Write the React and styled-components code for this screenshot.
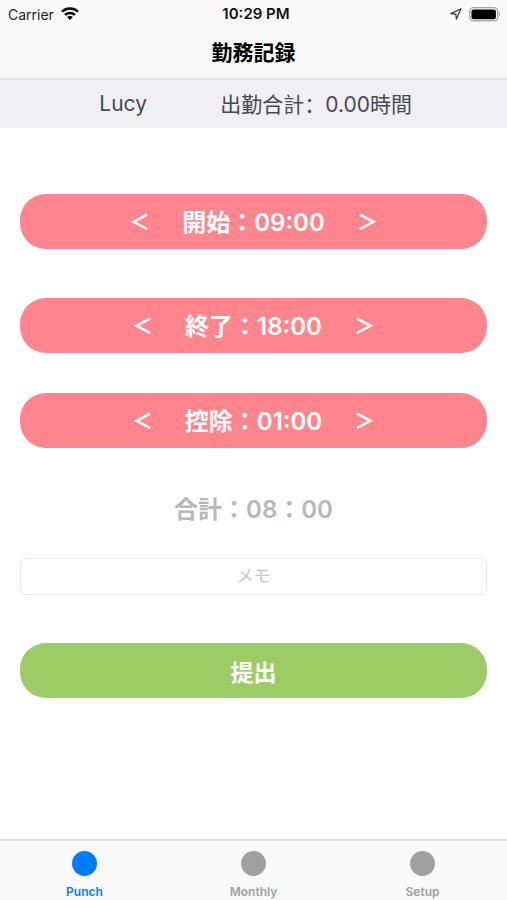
import React, { useState } from 'react';
import styled, { createGlobalStyle } from 'styled-components';

const COLORS = {
  bar: '#f9f9f9',
  line: '#e2e2e4',
  summary: '#efeff4',
  text: '#4a4a4c',
  pink: '#ff868e',
  green: '#9ccc65',
  muted: '#b8b8b8',
  placeholder: '#c7c7cb',
  active: '#007aff',
  inactive: '#a0a0a0',
};

const GlobalStyle = createGlobalStyle`
  * {
    box-sizing: border-box;
  }

  body {
    margin: 0;
    background: #fff;
    font-family: Inter, 'Noto Sans CJK JP', sans-serif;
  }

  button,
  input {
    font-family: inherit;
  }
`;

const Screen = styled.div`
  display: flex;
  flex-direction: column;
  min-height: 100vh;
`;

const Header = styled.header`
  background: ${COLORS.bar};
  border-bottom: 2px solid ${COLORS.line};
`;

const StatusBar = styled.div`
  display: grid;
  grid-template-columns: 1fr auto 1fr;
  align-items: center;
  height: 28px;
  padding: 0 6px 0 8px;
  font-size: 14px;
  color: #222;
`;

const StatusGroup = styled.div`
  display: flex;
  align-items: center;
  justify-content: ${props => (props.$end ? 'flex-end' : 'flex-start')};
  gap: 7px;
`;

const Clock = styled.time`
  padding-left: 3px;
  font-size: 15px;
  font-weight: 600;
  line-height: 16px;
  color: #111;
`;

const Title = styled.h1`
  margin: 0;
  font-size: 21px;
  font-weight: 700;
  line-height: 50px;
  text-align: center;
  color: #000;
`;

const Summary = styled.div`
  display: flex;
  align-items: center;
  height: 48px;
  padding-bottom: 2px;
  background: ${COLORS.summary};
  font-family: Inter, 'Noto Sans CJK SC', sans-serif;
  font-size: 21px;
  color: ${COLORS.text};
`;

const UserName = styled.span`
  flex: 1;
  padding-left: 26px;
  text-align: center;
`;

const HoursTotal = styled.span`
  flex: 0 0 auto;
  padding-right: 95px;
`;

const Form = styled.form`
  flex: 1;
  display: flex;
  flex-direction: column;
  padding: 66px 20px 24px;
`;

const Pill = styled.div`
  display: flex;
  align-items: center;
  justify-content: center;
  gap: 34px;
  height: 55px;
  margin-bottom: ${props => props.$gap};
  border-radius: 26px;
  background: ${COLORS.pink};
  color: #fff;
`;

const StepButton = styled.button`
  display: flex;
  padding: 0;
  border: 0;
  background: none;
  color: inherit;
  cursor: pointer;
`;

const TimeText = styled.span`
  padding-bottom: 2px;
  font-size: 24px;
  font-weight: 600;
`;

const Total = styled.p`
  margin: 0 0 28px;
  font-size: 24px;
  font-weight: 600;
  line-height: 40px;
  text-align: center;
  color: ${COLORS.muted};
`;

const MemoInput = styled.input`
  width: 100%;
  height: 37px;
  margin-bottom: 48px;
  padding: 0 8px 2px;
  border: 1px solid #e9e9e9;
  border-radius: 6px;
  background: #fff;
  font-size: 17px;
  text-align: center;

  &::placeholder {
    color: ${COLORS.placeholder};
    opacity: 1;
  }
`;

const SubmitButton = styled.button`
  height: 55px;
  padding: 0;
  border: 0;
  border-radius: 26px;
  background: ${COLORS.green};
  font-size: 23px;
  font-weight: 700;
  color: #fff;
  cursor: pointer;
`;

const TabBar = styled.nav`
  display: grid;
  grid-template-columns: repeat(3, 1fr);
  height: 61px;
  border-top: 2px solid ${COLORS.line};
  background: ${COLORS.bar};
`;

const Tab = styled.a`
  display: flex;
  flex-direction: column;
  align-items: center;
  gap: 8px;
  padding-top: 10px;
  font-size: 12px;
  font-weight: 600;
  line-height: 16px;
  color: ${props => (props.$active ? COLORS.active : COLORS.inactive)};
  text-decoration: none;
`;

const Dot = styled.span`
  width: 25px;
  height: 25px;
  border-radius: 50%;
  background: currentColor;
`;

const WifiIcon = () => (
  <svg width="18" height="14" viewBox="0 0 18 14" fill="none" stroke="#000" strokeWidth="2.4" aria-hidden="true">
    <path d="M1 4.6C5.4.4 12.6.4 17 4.6" />
    <path d="M4 7.9c2.8-2.6 7.2-2.6 10 0" />
    <path d="M9 13 6.1 10c1.6-1.5 4.2-1.5 5.8 0z" fill="#000" stroke="none" />
  </svg>
);

const LocationIcon = () => (
  <svg width="12" height="12" viewBox="0 0 12 12" fill="none" stroke="#333" strokeWidth="1.2" strokeLinejoin="round" aria-hidden="true">
    <path d="M11 .8.8 5.6l5 .5.6 5z" />
  </svg>
);

const BatteryIcon = () => (
  <svg width="32" height="15" viewBox="0 0 32 15" aria-hidden="true">
    <rect x="0.7" y="0.7" width="28" height="13.2" rx="3.8" fill="none" stroke="#a5a5a5" strokeWidth="1.3" />
    <rect x="2.5" y="2.4" width="24.4" height="9.8" rx="2" fill="#000" />
    <path d="M30 5.2c1.6.6 1.6 3.6 0 4.2z" fill="#a5a5a5" />
  </svg>
);

const Chevron = ({ right }) => (
  <svg width="17" height="18" viewBox="0 0 17 18" fill="none" stroke="currentColor" strokeWidth="2.5" aria-hidden="true">
    <path d={right ? 'M1 1.6 14.4 8.8 1 16' : 'M16 1.6 2.6 8.8 16 16'} />
  </svg>
);

const STEP = 30;

const formatTime = (minutes, separator = ':') => {
  const h = String(Math.floor(minutes / 60)).padStart(2, '0');
  const m = String(minutes % 60).padStart(2, '0');
  return `${h}${separator}${m}`;
};

const TimeStepper = ({ label, value, onChange, gap }) => {
  const move = delta => onChange(Math.min(Math.max(value + delta, 0), 24 * 60));

  return (
    <Pill $gap={gap}>
      <StepButton type="button" aria-label={`${label} −`} onClick={() => move(-STEP)}>
        <Chevron />
      </StepButton>
      <TimeText>{`${label}：${formatTime(value)}`}</TimeText>
      <StepButton type="button" aria-label={`${label} +`} onClick={() => move(STEP)}>
        <Chevron right />
      </StepButton>
    </Pill>
  );
};

const TABS = ['Punch', 'Monthly', 'Setup'];

export default function App() {
  const [start, setStart] = useState(9 * 60);
  const [end, setEnd] = useState(18 * 60);
  const [rest, setRest] = useState(60);
  const [memo, setMemo] = useState('');
  const [tab, setTab] = useState('Punch');

  const total = Math.max(end - start - rest, 0);

  return (
    <Screen>
      <GlobalStyle />
      <Header>
        <StatusBar>
          <StatusGroup>
            Carrier
            <WifiIcon />
          </StatusGroup>
          <Clock>10:29 PM</Clock>
          <StatusGroup $end>
            <LocationIcon />
            <BatteryIcon />
          </StatusGroup>
        </StatusBar>
        <Title>勤務記録</Title>
      </Header>

      <Summary>
        <UserName>Lucy</UserName>
        <HoursTotal lang="zh-Hans">出勤合計：0.00時間</HoursTotal>
      </Summary>

      <Form onSubmit={e => e.preventDefault()}>
        <TimeStepper label="開始" value={start} onChange={setStart} gap="49px" />
        <TimeStepper label="終了" value={end} onChange={setEnd} gap="40px" />
        <TimeStepper label="控除" value={rest} onChange={setRest} gap="42px" />
        <Total>{`合計：${formatTime(total, '：')}`}</Total>
        <MemoInput
          aria-label="メモ"
          placeholder="メモ"
          value={memo}
          onChange={e => setMemo(e.target.value)}
        />
        <SubmitButton type="submit">提出</SubmitButton>
      </Form>

      <TabBar>
        {TABS.map(name => (
          <Tab key={name} href={`#${name.toLowerCase()}`} $active={tab === name} onClick={() => setTab(name)}>
            <Dot />
            {name}
          </Tab>
        ))}
      </TabBar>
    </Screen>
  );
}
